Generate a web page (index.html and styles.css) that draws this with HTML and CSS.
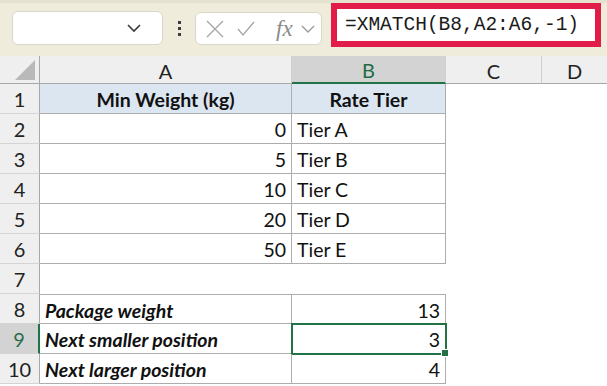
FILE: index.html
```html
<!DOCTYPE html>
<html lang="en">
<head>
    <meta charset="UTF-8">
    <title>XMATCH next smaller</title>
    <link rel="stylesheet" href="styles.css">
</head>
<body>
    <!-- Formula bar -->
    <div class="toolbar">
        <div class="name-box">
            <svg class="chev" width="16" height="10" viewBox="0 0 16 10"><path d="M2 2 L8 8 L14 2" fill="none" stroke="#3a3a3a" stroke-width="1.6"/></svg>
        </div>
        <div class="grip"><span></span><span></span><span></span></div>
        <div class="fx-box">
            <svg width="20" height="18" viewBox="0 0 20 18"><path d="M2 1 L18 17 M18 1 L2 17" stroke="#a8a8a8" stroke-width="1.4"/></svg>
            <svg width="18" height="16" viewBox="0 0 18 16"><path d="M1 8 L6 14 L17 1" fill="none" stroke="#a8a8a8" stroke-width="1.4"/></svg>
            <span class="fx">fx</span>
            <svg width="16" height="10" viewBox="0 0 16 10"><path d="M2 2 L8 8 L14 2" fill="none" stroke="#9a9a9a" stroke-width="1.4"/></svg>
        </div>
        <div class="formula">=XMATCH(B8,A2:A6,-1)</div>
    </div>

    <!-- Sheet grid -->
    <div class="sheet">
        <div class="hd corner"><span class="tri"></span></div>
        <div class="hd col">A</div>
        <div class="hd col sel">B</div>
        <div class="hd col">C</div>
        <div class="hd col last">D</div>

        <div class="hd row">1</div>
        <div class="c head bl">Min Weight (kg)</div>
        <div class="c head bl">Rate Tier</div>
        <div class="c"></div><div class="c"></div>

        <div class="hd row">2</div>
        <div class="c num bl">0</div>
        <div class="c bl">Tier A</div>
        <div class="c"></div><div class="c"></div>

        <div class="hd row">3</div>
        <div class="c num bl">5</div>
        <div class="c bl">Tier B</div>
        <div class="c"></div><div class="c"></div>

        <div class="hd row">4</div>
        <div class="c num bl">10</div>
        <div class="c bl">Tier C</div>
        <div class="c"></div><div class="c"></div>

        <div class="hd row">5</div>
        <div class="c num bl">20</div>
        <div class="c bl">Tier D</div>
        <div class="c"></div><div class="c"></div>

        <div class="hd row">6</div>
        <div class="c num bl">50</div>
        <div class="c bl">Tier E</div>
        <div class="c"></div><div class="c"></div>

        <div class="hd row">7</div>
        <div class="c"></div>
        <div class="c"></div>
        <div class="c"></div><div class="c"></div>

        <div class="hd row">8</div>
        <div class="c label bt bl">Package weight</div>
        <div class="c num bt bl">13</div>
        <div class="c"></div><div class="c"></div>

        <div class="hd row sel">9</div>
        <div class="c label bl">Next smaller position</div>
        <div class="c num bl active">3<span class="handle"></span></div>
        <div class="c"></div><div class="c"></div>

        <div class="hd row">10</div>
        <div class="c label bl">Next larger position</div>
        <div class="c num bl">4</div>
        <div class="c"></div><div class="c"></div>
    </div>
</body>
</html>
```

FILE: styles.css
```css
/* General */
body {
    margin: 0;
    background: #ffffff;
    font-family: 'Lato', 'Liberation Sans', sans-serif;
    color: #111;
    overflow: hidden;
}

/* Formula bar */
.toolbar {
    height: 56px;
    box-sizing: border-box;
    background: #efecdb;
    border-top: 3px solid #e4e1cf;
    display: flex;
    align-items: flex-start;
    padding-left: 12px;
}

.name-box {
    margin-top: 8px;
    width: 151px;
    height: 34px;
    box-sizing: border-box;
    background: #fff;
    border: 1px solid #d9d7c9;
    border-radius: 6px;
    display: flex;
    align-items: center;
    justify-content: flex-end;
    padding-right: 20px;
}

.grip {
    width: 32px;
    margin-top: 18px;
    display: flex;
    flex-direction: column;
    align-items: center;
    gap: 3px;
}

.grip span {
    width: 3px;
    height: 3px;
    background: #3c3c3c;
}

.fx-box {
    margin-top: 9px;
    width: 127px;
    height: 33px;
    box-sizing: border-box;
    background: #fff;
    border: 1px solid #d9d7c9;
    border-radius: 6px;
    display: flex;
    align-items: center;
    padding-left: 9px;
    gap: 12px;
}

.fx {
    font-family: 'Liberation Serif', serif;
    font-style: italic;
    font-size: 23px;
    color: #8a8a8a;
    margin-left: 9px;
    margin-right: -5px;
    line-height: 1;
}

.formula {
    margin-left: 9px;
    width: 270px;
    height: 44px;
    box-sizing: border-box;
    background: #fff;
    border: 6px solid #e21c48;
    font-family: 'Liberation Mono', monospace;
    font-size: 19.5px;
    line-height: 32px;
    padding-left: 8px;
    color: #1a1a1a;
    white-space: nowrap;
}

/* Sheet */
.sheet {
    display: grid;
    grid-template-columns: 40px 252px 154px 96px 65px;
    grid-template-rows: 28px repeat(10, 30px);
    font-size: 19.5px;
}

.hd {
    background: #efefef;
    color: #222;
    box-sizing: border-box;
    display: flex;
    align-items: center;
    justify-content: center;
    font-size: 20px;
}

.corner {
    border-right: 1px solid #a8a8a8;
    border-bottom: 1px solid #a8a8a8;
    position: relative;
}

.tri {
    position: absolute;
    right: 4px;
    bottom: 3px;
    width: 0;
    height: 0;
    border-left: 20px solid transparent;
    border-bottom: 20px solid #b9b9b9;
}

.col {
    border-right: 1px solid #cfcfcf;
    border-bottom: 1px solid #a8a8a8;
    padding-top: 2px;
}

.col.last {
    border-right: none;
}

.col.sel {
    background: #d3d3d3;
    color: #1f6b43;
    border-bottom: 2px solid #217346;
}

.row {
    border-right: 1px solid #a8a8a8;
    border-bottom: 1px solid #d4d4d4;
}

.row.sel {
    background: #d3d3d3;
    color: #2c6e4a;
    border-right: 2px solid #217346;
}

.c {
    box-sizing: border-box;
    display: flex;
    align-items: center;
    padding: 2px 5px 0 5px;
    white-space: nowrap;
    position: relative;
}

.bl {
    border-right: 1px solid #adadad;
    border-bottom: 1px solid #adadad;
}

.bt {
    border-top: 1px solid #adadad;
}

.head {
    background: #dce6f1;
    font-weight: bold;
    justify-content: center;
}

.num {
    justify-content: flex-end;
}

.label {
    font-weight: bold;
    font-style: italic;
}

.active {
    outline: 2px solid #217346;
    outline-offset: -1px;
}

.handle {
    position: absolute;
    right: -4px;
    bottom: -4px;
    width: 6px;
    height: 6px;
    background: #217346;
    border: 1px solid #fff;
    z-index: 2;
}
```
